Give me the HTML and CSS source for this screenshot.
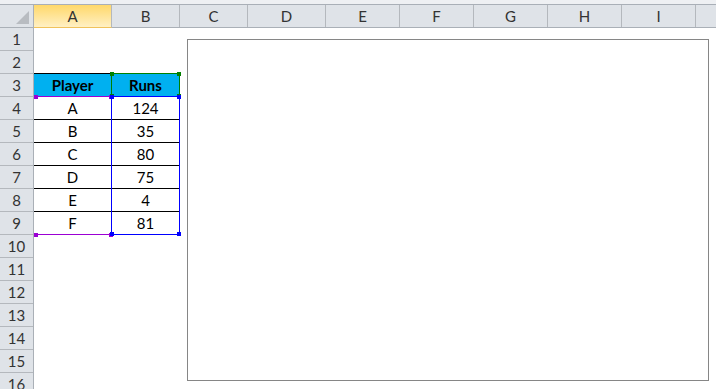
FILE: index.html
```html
<!DOCTYPE html>
<html lang="en">
<head>
  <meta charset="UTF-8">
  <title>Sheet1</title>
  <link rel="stylesheet" href="styles.css">
</head>
<body>
  <div class="sheet">
    <div class="topbar"></div>
    <div class="colhead">
      <div class="corner"><span class="tri"></span></div>
      <div class="col sel">A</div>
      <div class="col">B</div>
      <div class="col">C</div>
      <div class="col">D</div>
      <div class="col">E</div>
      <div class="col">F</div>
      <div class="col">G</div>
      <div class="col">H</div>
      <div class="col">I</div>
      <div class="col last"></div>
    </div>
    <div class="body">
      <div class="rowheads">
        <div class="rh">1</div><div class="rh">2</div><div class="rh">3</div><div class="rh">4</div>
        <div class="rh">5</div><div class="rh">6</div><div class="rh">7</div><div class="rh">8</div>
        <div class="rh">9</div><div class="rh">10</div><div class="rh">11</div><div class="rh">12</div>
        <div class="rh">13</div><div class="rh">14</div><div class="rh">15</div><div class="rh">16</div>
      </div>
      <div class="cells">
        <div class="data">
          <div class="c a hd">Player</div><div class="c b hd">Runs</div>
          <div class="c a">A</div><div class="c b">124</div>
          <div class="c a">B</div><div class="c b">35</div>
          <div class="c a">C</div><div class="c b">80</div>
          <div class="c a">D</div><div class="c b">75</div>
          <div class="c a">E</div><div class="c b">4</div>
          <div class="c a">F</div><div class="c b">81</div>
        </div>

        <!-- range highlights drawn over the cells -->
        <div class="hl purple top"><i class="h tl"></i><i class="h tr"></i></div>
        <div class="hl purple bot"><i class="h tl"></i><i class="h tr"></i></div>
        <div class="hl green"><i class="h tl"></i><i class="h tr"></i><i class="h bl"></i><i class="h br"></i></div>
        <div class="hl blue"><i class="h tl"></i><i class="h tr"></i><i class="h bl"></i><i class="h br"></i></div>

        <div class="chart"></div>
      </div>
    </div>
  </div>
</body>
</html>
```

FILE: styles.css
```css
body { margin: 0; background: #fff; font-family: Lato, "Liberation Sans", sans-serif; font-size: 15px; color: #000; overflow: hidden; }
.sheet { width: 716px; height: 389px; overflow: hidden; }

.topbar { height: 4px; background: #eef0f3; border-bottom: 1px solid #a9afb7; }

.colhead { display: grid; grid-template-columns: 34px 78px 68px 68px 78px repeat(5, 74px) 1fr; height: 22px; border-bottom: 1px solid #aab0b7; background: #dfe3e8; }
.col { border-right: 1px solid #b4b8bd; display: flex; align-items: center; justify-content: center; color: #333; }
.col.last { border-right: 0; }
.col.sel { background: linear-gradient(#ffd86a, #fff0c4); border-bottom: 1px solid #f0c25c; margin-bottom: -1px; }
.corner { position: relative; border-right: 1px solid #aab0b7; }
.tri { position: absolute; right: 4px; bottom: 3px; width: 0; height: 0; border-left: 13px solid transparent; border-bottom: 13px solid #b8bcc1; }

.body { display: flex; position: relative; }
.rowheads { width: 33px; border-right: 1px solid #aab0b7; background: #dfe3e8; }
.rh { height: 22px; border-bottom: 1px solid #b4b8bd; display: flex; align-items: center; justify-content: center; color: #333; }

.cells { flex: 1; position: relative; height: 361px; }
.data { display: grid; grid-template-columns: 78px 68px; margin-top: 45px; border-top: 1px solid #000; width: 146px; }
.c { height: 22px; border-right: 1px solid #000; border-bottom: 1px solid #000; display: flex; align-items: center; justify-content: center; }
.c.hd { background: #00b0f0; font-weight: bold; }

.hl { position: absolute; }
.hl .h { position: absolute; width: 4px; height: 4px; }
.purple { left: 0; width: 78px; height: 0; border-top: 1px solid #9b00d3; }
.purple.top { top: 68px; }
.purple.bot { top: 206px; }
.purple .h { background: #9b00d3; top: -3px; }
.green { left: 77px; top: 45px; width: 67px; height: 22px; border: 1px solid #008000; }
.green .h { background: #008000; }
.blue { left: 77px; top: 68px; width: 67px; height: 137px; border: 1px solid #0000ff; }
.blue .h { background: #0000ff; }
.hl .tl { left: -2px; top: -2px; }
.hl .tr { right: -2px; top: -2px; }
.hl .bl { left: -2px; bottom: -2px; }
.hl .br { right: -2px; bottom: -2px; }
.purple .tl { left: 0; top: -2px; }
.purple .tr { right: -1px; top: -2px; }

.chart { position: absolute; left: 153px; top: 11px; width: 520px; height: 340px; border: 1px solid #868686; background: #fff; }
```
